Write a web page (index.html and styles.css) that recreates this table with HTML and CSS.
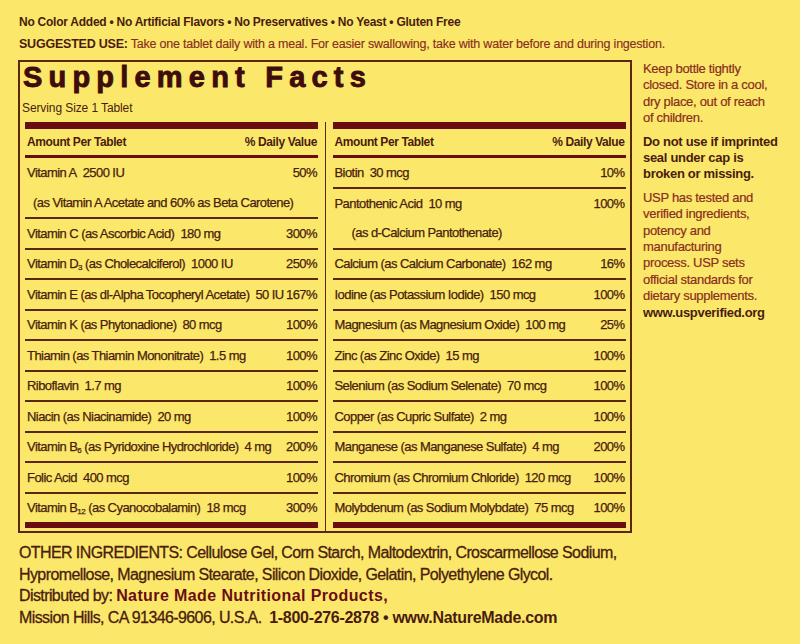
FILE: index.html
```html
<!DOCTYPE html>
<html lang="en">
<head>
<meta charset="utf-8">
<title>Supplement Facts</title>
<link rel="stylesheet" href="styles.css">
</head>
<body>
<div class="label">
  <p class="claims">No Color Added • No Artificial Flavors • No Preservatives • No Yeast • Gluten Free</p>
  <p class="use"><b>SUGGESTED USE:</b> Take one tablet daily with a meal. For easier swallowing, take with water before and during ingestion.</p>
  <div class="main">
    <section class="facts">
      <h1 class="title">Supplement Facts</h1>
      <p class="serving">Serving Size 1 Tablet</p>
      <div class="cols">
        <div class="col">
          <div class="head"><span>Amount Per Tablet</span><span>% Daily Value</span></div>
          <div class="row double">
            <div class="line"><span>Vitamin A<span class="amt">2500 IU</span></span><span>50%</span></div>
            <div class="line"><span class="sub-l">(as Vitamin A Acetate and 60% as Beta Carotene)</span></div>
          </div>
          <div class="row"><div class="line"><span>Vitamin C (as Ascorbic Acid)<span class="amt">180 mg</span></span><span>300%</span></div></div>
          <div class="row"><div class="line"><span>Vitamin D<sub>3</sub> (as Cholecalciferol)<span class="amt">1000 IU</span></span><span>250%</span></div></div>
          <div class="row"><div class="line"><span>Vitamin E (as dl-Alpha Tocopheryl Acetate)<span class="amt">50 IU</span></span><span>167%</span></div></div>
          <div class="row"><div class="line"><span>Vitamin K (as Phytonadione)<span class="amt">80 mcg</span></span><span>100%</span></div></div>
          <div class="row"><div class="line"><span>Thiamin (as Thiamin Mononitrate)<span class="amt">1.5 mg</span></span><span>100%</span></div></div>
          <div class="row"><div class="line"><span>Riboflavin<span class="amt">1.7 mg</span></span><span>100%</span></div></div>
          <div class="row"><div class="line"><span>Niacin (as Niacinamide)<span class="amt">20 mg</span></span><span>100%</span></div></div>
          <div class="row"><div class="line"><span>Vitamin B<sub>6</sub> (as Pyridoxine Hydrochloride)<span class="amt">4 mg</span></span><span>200%</span></div></div>
          <div class="row"><div class="line"><span>Folic Acid<span class="amt">400 mcg</span></span><span>100%</span></div></div>
          <div class="row last"><div class="line"><span>Vitamin B<sub>12</sub> (as Cyanocobalamin)<span class="amt">18 mcg</span></span><span>300%</span></div></div>
        </div>
        <div class="divider"></div>
        <div class="col">
          <div class="head"><span>Amount Per Tablet</span><span>% Daily Value</span></div>
          <div class="row"><div class="line"><span>Biotin<span class="amt">30 mcg</span></span><span>10%</span></div></div>
          <div class="row double">
            <div class="line"><span>Pantothenic Acid<span class="amt">10 mg</span></span><span>100%</span></div>
            <div class="line"><span class="sub-r">(as d-Calcium Pantothenate)</span></div>
          </div>
          <div class="row"><div class="line"><span>Calcium (as Calcium Carbonate)<span class="amt">162 mg</span></span><span>16%</span></div></div>
          <div class="row"><div class="line"><span>Iodine (as Potassium Iodide)<span class="amt">150 mcg</span></span><span>100%</span></div></div>
          <div class="row"><div class="line"><span>Magnesium (as Magnesium Oxide)<span class="amt">100 mg</span></span><span>25%</span></div></div>
          <div class="row"><div class="line"><span>Zinc (as Zinc Oxide)<span class="amt">15 mg</span></span><span>100%</span></div></div>
          <div class="row"><div class="line"><span>Selenium (as Sodium Selenate)<span class="amt">70 mcg</span></span><span>100%</span></div></div>
          <div class="row"><div class="line"><span>Copper (as Cupric Sulfate)<span class="amt">2 mg</span></span><span>100%</span></div></div>
          <div class="row"><div class="line"><span>Manganese (as Manganese Sulfate)<span class="amt">4 mg</span></span><span>200%</span></div></div>
          <div class="row"><div class="line"><span>Chromium (as Chromium Chloride)<span class="amt">120 mcg</span></span><span>100%</span></div></div>
          <div class="row last"><div class="line"><span>Molybdenum (as Sodium Molybdate)<span class="amt">75 mcg</span></span><span>100%</span></div></div>
        </div>
      </div>
    </section>
    <aside class="notes">
      <p class="note">Keep bottle tightly<br>closed. Store in a cool,<br>dry place, out of reach<br>of children.</p>
      <p class="note warn">Do not use if imprinted<br>seal under cap is<br>broken or missing.</p>
      <p class="note">USP has tested and<br>verified ingredients,<br>potency and<br>manufacturing<br>process. USP sets<br>official standards for<br>dietary supplements.<br><b>www.uspverified.org</b></p>
    </aside>
  </div>
  <div class="other">
    <p>OTHER INGREDIENTS: Cellulose Gel, Corn Starch, Maltodextrin, Croscarmellose Sodium,<br>Hypromellose, Magnesium Stearate, Silicon Dioxide, Gelatin, Polyethylene Glycol.</p>
    <p>Distributed by: <b class="brand">Nature Made Nutritional Products,</b><br>Mission Hills, CA 91346-9606, U.S.A.&nbsp; <b>1-800-276-2878 • www.NatureMade.com</b></p>
  </div>
</div>
</body>
</html>
```

FILE: styles.css
```css
:root {
  --bg: #fbe86a;
  --ink: #4a1c0e;
  --red: #8a2e1e;
  --bar: #6a0d12;
  --rule: #5a2812;
  --sans: "Liberation Sans", Arial, sans-serif;
}

* { box-sizing: border-box; }

html, body {
  margin: 0;
  background: var(--bg);
}

body {
  width: 800px;
  height: 644px;
  overflow: hidden;
  font-family: var(--sans);
  color: var(--ink);
}

p { margin: 0; }

.label {
  padding: 11px 0 0 18px;
}

.claims,
.use {
  line-height: 22px;
  padding-left: 1px;
  white-space: nowrap;
}

.claims {
  font-size: 12px;
  font-weight: bold;
  letter-spacing: -0.25px;
}

.use {
  font-size: 12.5px;
  letter-spacing: -0.22px;
  color: var(--red);
  -webkit-text-stroke: 0.15px var(--red);
}
.use b {
  color: var(--ink);
  -webkit-text-stroke: 0;
}

.main {
  display: flex;
  align-items: flex-start;
  margin-top: 5px;
}

.facts {
  width: 614px;
  flex: none;
  border: 2px solid var(--rule);
  padding: 1px 4.5px 0 5px;
}

.title {
  margin: 0 0 0 -2px;
  font-size: 29px;
  line-height: 29px;
  font-weight: bold;
  letter-spacing: 6.2px;
  color: #3e0c0a;
  -webkit-text-stroke: 0.9px #3e0c0a;
}

.serving {
  margin: 9px 0 0 -3px;
  font-size: 12px;
  line-height: 14px;
  letter-spacing: -0.1px;
}

.cols {
  display: grid;
  grid-template-columns: 293px 1.5px 293px;
  column-gap: 6.5px;
  margin-top: 7px;
}

.divider {
  background: var(--rule);
}

.col {
  border-top: 7px solid var(--bar);
  border-bottom: 6px solid var(--bar);
  margin-bottom: 3px;
  font-size: 13px;
  letter-spacing: -0.56px;
}

.head {
  display: flex;
  justify-content: space-between;
  align-items: center;
  height: 29px;
  padding: 0 1px 0 2px;
  border-bottom: 3px solid var(--bar);
  font-size: 12px;
  font-weight: bold;
  letter-spacing: -0.4px;
}

.row {
  border-bottom: 2px solid var(--rule);
}

.row.last { border-bottom: none; }

.line {
  display: flex;
  justify-content: space-between;
  align-items: center;
  height: 28.5px;
  padding: 0 1px 0 2px;
  white-space: nowrap;
  -webkit-text-stroke: 0.25px var(--ink);
}

.double .line { height: 29.5px; }

.amt { margin-left: 6px; }

.sub-l { margin-left: 6px; }
.sub-r { margin-left: 17px; }

sub {
  font-size: 8px;
  vertical-align: -2px;
  line-height: 0;
}

.notes {
  margin-left: 11px;
  padding-top: 1px;
  font-size: 13px;
  line-height: 16.4px;
  letter-spacing: -0.3px;
  color: var(--red);
  -webkit-text-stroke: 0.2px var(--red);
}

.note + .note { margin-top: 7px; }

.note.warn {
  font-weight: bold;
  color: var(--ink);
  -webkit-text-stroke: 0;
}

.note b {
  color: var(--ink);
  -webkit-text-stroke: 0;
}

.other {
  margin-top: 9px;
  padding-left: 1px;
  font-size: 16px;
  line-height: 21.7px;
  letter-spacing: -0.6px;
  white-space: nowrap;
  -webkit-text-stroke: 0.3px var(--ink);
}

.other b {
  color: var(--ink);
  -webkit-text-stroke: 0;
  letter-spacing: -0.3px;
}
.other .brand {
  color: #6a0d12;
  letter-spacing: 0.4px;
}
```
